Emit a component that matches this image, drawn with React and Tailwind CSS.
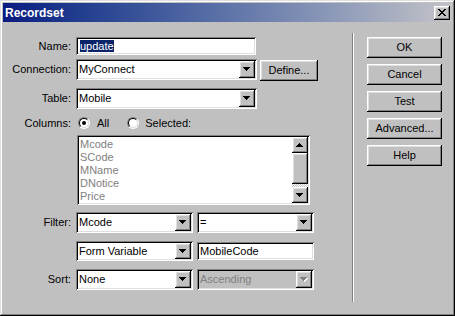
import React from "react";

const sunken =
  "shadow-[inset_1px_1px_#808080,inset_-1px_-1px_#ffffff,inset_2px_2px_#000000,inset_-2px_-2px_#dfdfdf]";
const raised =
  "shadow-[inset_-1px_-1px_#000000,inset_1px_1px_#ffffff,inset_-2px_-2px_#808080,inset_2px_2px_#dfdfdf]";

function Arrow({ up = false, color = "#000", shadow = false }) {
  const rows = up
    ? [
        [3, 0, 1],
        [2, 1, 3],
        [1, 2, 5],
        [0, 3, 7],
      ]
    : [
        [0, 0, 7],
        [1, 1, 5],
        [2, 2, 3],
        [3, 3, 1],
      ];
  return (
    <svg width="8" height="5" viewBox="0 0 8 5" shapeRendering="crispEdges">
      {shadow &&
        rows.map(([x, y, w], i) => (
          <rect key={"s" + i} x={x + 1} y={y + 1} width={w} height="1" fill="#ffffff" />
        ))}
      {rows.map(([x, y, w], i) => (
        <rect key={i} x={x} y={y} width={w} height="1" fill={color} />
      ))}
    </svg>
  );
}

function DropBtn({ disabled = false }) {
  return (
    <div className={`w-[16px] h-full bg-[#c0c0c0] flex items-center justify-center ${raised}`}>
      <Arrow color={disabled ? "#808080" : "#000"} shadow={disabled} />
    </div>
  );
}

function Select({ value, w, h = "h-[21px]", disabled = false }) {
  return (
    <div
      className={`${w} ${h} ${disabled ? "bg-[#c0c0c0]" : "bg-white"} ${sunken} p-[2px] flex items-stretch`}
    >
      <div
        className={`flex-1 flex items-center pl-[1px] leading-none ${
          disabled ? "text-[#808080]" : "text-black"
        }`}
      >
        {value}
      </div>
      <DropBtn disabled={disabled} />
    </div>
  );
}

function Label({ children }) {
  return <div className="w-[68px] text-right leading-none shrink-0">{children}</div>;
}

function Radio({ checked }) {
  return (
    <div className="w-[12px] h-[12px] rounded-full border border-t-[#808080] border-l-[#808080] border-b-white border-r-white">
      <div className="w-full h-full rounded-full border border-t-[#000000] border-l-[#000000] border-b-[#dfdfdf] border-r-[#dfdfdf] bg-white flex items-center justify-center">
        {checked && <div className="w-[4px] h-[4px] rounded-full bg-black" />}
      </div>
    </div>
  );
}

function Button({ children, w = "w-[75px]", className = "" }) {
  return (
    <div
      className={`${w} h-[21px] bg-[#c0c0c0] flex items-center justify-center leading-none shrink-0 ${raised} ${className}`}
    >
      {children}
    </div>
  );
}

function CloseGlyph() {
  const px = [
    [0, 0], [1, 0], [6, 0], [7, 0],
    [1, 1], [2, 1], [5, 1], [6, 1],
    [2, 2], [3, 2], [4, 2], [5, 2],
    [3, 3], [4, 3],
    [2, 4], [3, 4], [4, 4], [5, 4],
    [1, 5], [2, 5], [5, 5], [6, 5],
    [0, 6], [1, 6], [6, 6], [7, 6],
  ];
  return (
    <svg width="8" height="7" viewBox="0 0 8 7" shapeRendering="crispEdges">
      {px.map(([x, y], i) => (
        <rect key={i} x={x} y={y} width="1" height="1" fill="#000" />
      ))}
    </svg>
  );
}

export default function App() {
  const items = ["Mcode", "SCode", "MName", "DNotice", "Price"];
  return (
    <div
      className="w-[455px] h-[316px] bg-[#c0c0c0] p-[3px] text-[11px] text-black font-['Liberation_Sans',Arial,sans-serif] shadow-[inset_-1px_-1px_#000000,inset_1px_1px_#dfdfdf,inset_-2px_-2px_#808080,inset_2px_2px_#ffffff] overflow-hidden"
    >
      {/* Title bar */}
      <div className="h-[19px] flex items-center justify-between bg-gradient-to-r from-[#0a1a80] to-[#c4c4c8] pl-[2px] pr-[2px]">
        <span className="text-white font-bold text-[12px] leading-none">Recordset</span>
        <div className={`w-[16px] h-[14px] bg-[#c0c0c0] flex items-center justify-center ${raised}`}>
          <CloseGlyph />
        </div>
      </div>

      {/* Body */}
      <div className="flex">
        {/* Form */}
        <div className="w-[349px] flex flex-col">
          {/* Name */}
          <div className="mt-[15px] h-[18px] flex items-center">
            <Label>Name:</Label>
            <div className={`ml-[5px] w-[180px] h-[18px] bg-white ${sunken} px-[4px] flex items-center`}>
              <span className="bg-[#0a246a] text-white leading-[12px] h-[12px]">update</span>
            </div>
          </div>
          {/* Connection */}
          <div className="mt-[4px] h-[21px] flex items-center">
            <Label>Connection:</Label>
            <div className="ml-[5px]">
              <Select value="MyConnect" w="w-[181px]" />
            </div>
            <Button w="w-[58px]" className="ml-[3px] mt-[2px]">Define...</Button>
          </div>
          {/* Table */}
          <div className="mt-[8px] h-[21px] flex items-center">
            <Label>Table:</Label>
            <div className="ml-[5px]">
              <Select value="Mobile" w="w-[181px]" />
            </div>
          </div>
          {/* Columns */}
          <div className="mt-[7px] h-[14px] flex items-center">
            <Label>Columns:</Label>
            <div className="ml-[7px]">
              <Radio checked />
            </div>
            <span className="ml-[7px] leading-none">All</span>
            <div className="ml-[18px]">
              <Radio />
            </div>
            <span className="ml-[6px] leading-none">Selected:</span>
          </div>
          {/* Listbox */}
          <div className={`mt-[5px] ml-[74px] w-[233px] h-[70px] bg-white ${sunken} p-[2px] flex`}>
            <div className="flex-1 pl-[1px] pt-[1px] text-[#808080] leading-[13px]">
              {items.map((t) => (
                <div key={t}>{t}</div>
              ))}
            </div>
            <div className="w-[16px] flex flex-col">
              <div className={`h-[16px] bg-[#c0c0c0] flex items-center justify-center ${raised}`}>
                <Arrow up />
              </div>
              <div className={`h-[31px] bg-[#c0c0c0] ${raised}`} />
              <div className="flex-1 bg-[repeating-conic-gradient(#ffffff_0_25%,#c0c0c0_0_50%)] bg-[length:2px_2px]" />
              <div className={`h-[16px] bg-[#c0c0c0] flex items-center justify-center ${raised}`}>
                <Arrow />
              </div>
            </div>
          </div>
          {/* Filter */}
          <div className="mt-[7px] h-[21px] flex items-center">
            <Label>Filter:</Label>
            <div className="ml-[5px] flex gap-[4px]">
              <Select value="Mcode" w="w-[117px]" />
              <Select value="=" w="w-[117px]" />
            </div>
          </div>
          {/* Form variable */}
          <div className="mt-[8px] h-[20px] flex items-center">
            <div className="ml-[73px] flex gap-[4px] items-center">
              <Select value="Form Variable" w="w-[117px]" h="h-[20px]" />
              <div className={`w-[117px] h-[18px] bg-white ${sunken} px-[3px] flex items-center leading-none`}>
                MobileCode
              </div>
            </div>
          </div>
          {/* Sort */}
          <div className="mt-[8px] h-[21px] flex items-center">
            <Label>Sort:</Label>
            <div className="ml-[5px] flex gap-[4px]">
              <Select value="None" w="w-[117px]" />
              <Select value="Ascending" w="w-[117px]" disabled />
            </div>
          </div>
        </div>

        {/* Separator */}
        <div className="mt-[11px] h-[269px] w-[2px] flex">
          <div className="w-[1px] h-full bg-[#808080]" />
          <div className="w-[1px] h-full bg-white" />
        </div>

        {/* Buttons */}
        <div className="ml-[13px] mt-[15px] flex flex-col gap-[6px]">
          <Button>OK</Button>
          <Button>Cancel</Button>
          <Button>Test</Button>
          <Button>Advanced...</Button>
          <Button>Help</Button>
        </div>
      </div>
    </div>
  );
}
